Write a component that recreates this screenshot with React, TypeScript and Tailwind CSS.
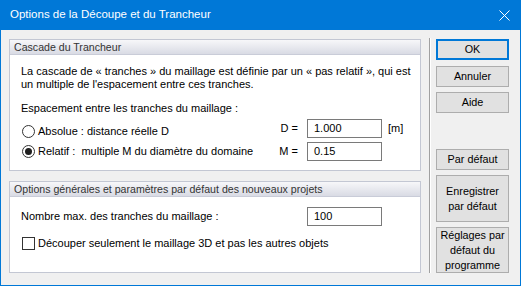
import { useState } from "react";

const font = { fontFamily: '"Liberation Sans", Arial, sans-serif' };

function GroupBox({ title, className, children }: { title: string; className: string; children: React.ReactNode }) {
  return (
    <div className={`flex flex-col border border-[#c3c7d3] bg-white ${className}`}>
      <div className="h-[15px] shrink-0 whitespace-nowrap border-b border-[#c9ccd8] bg-gradient-to-b from-[#f7f7f9] to-[#d9dbe4] pl-[4px] text-[10.6px] leading-[15px] text-[#333333]">
        {title}
      </div>
      <div className="flex-1 whitespace-nowrap px-[11px]">{children}</div>
    </div>
  );
}

function Radio({ checked }: { checked: boolean }) {
  return (
    <span className="mr-[3px] ml-[1px] flex h-[13px] w-[13px] shrink-0 items-center justify-center rounded-full border border-[#333333] bg-white">
      {checked && <span className="h-[7px] w-[7px] rounded-full bg-[#1f1f1f]" />}
    </span>
  );
}

function Field({ value }: { value: string }) {
  return (
    <div className="flex h-[19px] w-[75px] items-center border border-[#7a7a7a] bg-white pl-[6px] text-[11px]">{value}</div>
  );
}

function Btn({ children, className = "", primary = false }: { children: React.ReactNode; className?: string; primary?: boolean }) {
  return (
    <button
      className={`flex w-[73px] items-center justify-center whitespace-nowrap bg-[#e1e1e1] text-center text-[10.8px] leading-[15px] text-black ${
        primary ? "border-2 border-[#0078d7]" : "border border-[#adadad]"
      } ${className}`}
    >
      {children}
    </button>
  );
}

export default function App() {
  const [relatif] = useState(true);
  return (
    <div style={font} className="h-[286px] w-[521px] border border-t-0 border-[#0078d7] bg-[#f0f0f0] text-black">
      <div className="-mx-px flex h-[30px] items-center justify-between bg-[#0078d7] pl-[10px] pr-[10px] text-[11.5px] text-white">
        <span>Options de la Découpe et du Trancheur</span>
        <svg width="11" height="11" viewBox="0 0 11 11" className="mr-[1px]">
          <path d="M0.5 0.5 L10.5 10.5 M10.5 0.5 L0.5 10.5" stroke="white" strokeWidth="1" />
        </svg>
      </div>

      <div className="flex pl-[8px] pt-[9px]">
        <div className="flex w-[412px] flex-col gap-[10px]">
          <GroupBox title="Cascade du Trancheur" className="h-[132px]">
            <p className="pt-[10px] text-[11px] leading-[13px]">
              La cascade de « tranches » du maillage est définie par un « pas relatif », qui est
              <br />
              un multiple de l'espacement entre ces tranches.
            </p>
            <p className="mt-[11px] text-[11px] leading-[13px]">Espacement entre les tranches du maillage :</p>
            <div className="mt-[4px] flex h-[19px] items-center text-[11px]">
              <div className="mt-[6px] flex w-[249px] items-center">
                <Radio checked={!relatif} />
                <span>Absolue : distance réelle D</span>
              </div>
              <span className="w-[30px] pr-[2px] text-right">D =</span>
              <div className="ml-[7px]">
                <Field value="1.000" />
              </div>
              <span className="ml-[6px]">[m]</span>
            </div>
            <div className="mt-[4px] flex h-[19px] items-center text-[11px]">
              <div className="flex w-[249px] items-center">
                <Radio checked={relatif} />
                <span>Relatif :&nbsp; multiple M du diamètre du domaine</span>
              </div>
              <span className="w-[30px] pr-[2px] text-right">M =</span>
              <div className="ml-[7px]">
                <Field value="0.15" />
              </div>
            </div>
          </GroupBox>

          <GroupBox title="Options générales et paramètres par défaut des nouveaux projets" className="h-[92px]">
            <div className="mt-[10px] flex h-[19px] items-center text-[11px]">
              <span className="w-[286px]">Nombre max. des tranches du maillage :</span>
              <Field value="100" />
            </div>
            <div className="mt-[11px] flex h-[13px] items-center text-[11px]">
              <span className="mr-[3px] ml-[1px] h-[13px] w-[13px] shrink-0 border border-[#333333] bg-white" />
              <span>Découper seulement le maillage 3D et pas les autres objets</span>
            </div>
          </GroupBox>
        </div>

        <div className="ml-[8px] flex h-[235px] -mt-[1px]">
          <div className="w-px bg-[#a0a0a0]" />
          <div className="w-px bg-white" />
        </div>

        <div className="ml-[5px] flex flex-col">
          <Btn primary className="h-[21px]">OK</Btn>
          <Btn className="mt-[6px] h-[21px]">Annuler</Btn>
          <Btn className="mt-[5px] h-[21px]">Aide</Btn>
          <Btn className="mt-[36px] h-[21px]">Par défaut</Btn>
          <Btn className="mt-[5px] h-[47px]">
            Enregistrer
            <br />
            par défaut
          </Btn>
          <Btn className="mt-[5px] h-[46px]">
            Réglages par
            <br />
            défaut du
            <br />
            programme
          </Btn>
        </div>
      </div>
    </div>
  );
}
